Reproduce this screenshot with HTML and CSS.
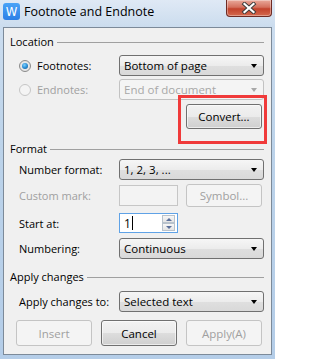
FILE: index.html
```html
<!DOCTYPE html>
<html>
<head>
<meta charset="utf-8">
<link rel="stylesheet" href="styles.css">
</head>
<body>
<div class="window">
  <div class="titlebar">
    <div class="app-icon"><span>W</span></div>
    <div class="title">Footnote and Endnote</div>
    <div class="close">
      <svg width="18" height="12" viewBox="0 0 18 12">
        <path d="M4.5 2 L13.5 10 M13.5 2 L4.5 10" stroke="#3b3b3b" stroke-width="4" stroke-linecap="square" fill="none"/>
        <path d="M4.5 2 L13.5 10 M13.5 2 L4.5 10" stroke="#ffffff" stroke-width="2.2" stroke-linecap="square" fill="none"/>
      </svg>
    </div>
  </div>
  <div class="client">
    <div class="group-head h1">Location</div>

    <div class="row r-foot">
      <div class="label radio-label"><span class="radio checked"></span>Footnotes:</div>
      <div class="combo">Bottom of page<span class="arrow"></span></div>
    </div>
    <div class="row r-end">
      <div class="label radio-label disabled"><span class="radio off"></span>Endnotes:</div>
      <div class="combo disabled">End of document<span class="arrow"></span></div>
    </div>
    <div class="row r-convert">
      <div class="btn-wrap">
        <div class="btn">Convert...</div>
        <div class="highlight"></div>
      </div>
    </div>

    <div class="group-head h2">Format</div>
    <div class="row r-num">
      <div class="label">Number format:</div>
      <div class="combo">1, 2, 3, ...<span class="arrow"></span></div>
    </div>
    <div class="row r-custom">
      <div class="label disabled">Custom mark:</div>
      <div class="field disabled"></div>
      <div class="btn disabled symbol">Symbol...</div>
    </div>
    <div class="row r-start">
      <div class="label">Start at:</div>
      <div class="field active">
        <span class="val">1</span><span class="caret"></span>
        <div class="spin">
          <div class="spin-btn"><span class="up"></span></div>
          <div class="spin-btn"><span class="down"></span></div>
        </div>
      </div>
    </div>
    <div class="row r-numbering">
      <div class="label">Numbering:</div>
      <div class="combo">Continuous<span class="arrow"></span></div>
    </div>

    <div class="group-head h3">Apply changes</div>
    <div class="row r-apply">
      <div class="label">Apply changes to:</div>
      <div class="combo">Selected text<span class="arrow"></span></div>
    </div>
    <div class="row r-buttons">
      <div class="btn disabled">Insert</div>
      <div class="btn">Cancel</div>
      <div class="btn disabled">Apply(A)</div>
    </div>
  </div>
</div>
</body>
</html>
```

FILE: styles.css
```css
html, body {
  margin: 0;
  padding: 0;
}
body {
  width: 275px;
  height: 359px;
  overflow: hidden;
  font-family: "Open Sans", "Noto Sans", sans-serif;
  font-size: 11px;
  color: #000;
}
.window {
  width: 275px;
  height: 359px;
  box-sizing: border-box;
  background: linear-gradient(180deg, #cfdff0 0%, #bcd3ea 40%, #b4cde8 100%);
  display: flex;
  flex-direction: column;
}
.titlebar {
  height: 27px;
  display: flex;
  align-items: flex-start;
  position: relative;
  background: linear-gradient(180deg, #dfe9f5 0%, #cbdcee 100%);
}
.app-icon {
  width: 17px;
  height: 17px;
  margin: 3px 0 0 3px;
  border-radius: 3px;
  background: linear-gradient(180deg, #4aa3f7 0%, #2d7fe6 100%);
  display: flex;
  align-items: center;
  justify-content: center;
}
.app-icon span {
  color: #fff;
  font-family: "DejaVu Sans", sans-serif;
  font-size: 13px;
  line-height: 13px;
  font-weight: normal;
  transform: scaleX(0.9);
}
.title {
  margin: 4px 0 0 4px;
  font-size: 12.5px;
  line-height: 16px;
  color: #000;
}
.close {
  position: absolute;
  top: 0;
  right: 3px;
  width: 46px;
  height: 17px;
  box-sizing: border-box;
  border: 1px solid #6e2b24;
  border-top: none;
  border-radius: 0 0 4px 4px;
  background: linear-gradient(180deg, #e9a99b 0%, #d4705d 45%, #c2422c 55%, #d46a4f 100%);
  box-shadow: inset 0 0 0 1px rgba(255,255,255,0.35);
  display: flex;
  align-items: center;
  justify-content: center;
}
.client {
  margin: 0 3px;
  height: 328px;
  box-sizing: border-box;
  border: 1px solid #7c8a99;
  background: #f0f0f0;
  padding: 0 7px 0 6px;
  display: flex;
  flex-direction: column;
}
.group-head {
  height: 16px;
  display: flex;
  align-items: center;
  line-height: 16px;
  white-space: nowrap;
}
.group-head::after {
  content: "";
  flex: 1;
  height: 0;
  border-top: 1px solid #a0a0a0;
  margin-left: 3px;
  margin-top: 1px;
}
.h1 { margin-top: 6px; }
.h2 { margin-top: 12px; }
.h3 { margin-top: 10px; }

.row {
  display: flex;
  align-items: center;
  padding-left: 9px;
}
.r-foot { margin-top: 5px; height: 21px; }
.r-end { margin-top: 3px; height: 21px; }
.r-convert { margin-top: 4px; height: 25px; justify-content: flex-end; }
.r-num { margin-top: 2px; height: 21px; }
.r-custom { margin-top: 4px; height: 23px; }
.r-start { margin-top: 6px; height: 20px; }
.r-numbering { margin-top: 5px; height: 21px; }
.r-apply { margin-top: 6px; height: 21px; }
.r-buttons { margin-top: 8px; height: 26px; padding-left: 6px; gap: 9px; }

.label {
  width: 100px;
  flex: none;
  display: flex;
  align-items: center;
  white-space: nowrap;
}
.disabled { color: #a0a0a0; }

.radio {
  width: 12px;
  height: 12px;
  box-sizing: border-box;
  border-radius: 50%;
  margin-right: 6px;
  flex: none;
  position: relative;
}
.radio.checked {
  border: 1px solid #8a8a8a;
  background: radial-gradient(circle at 50% 50%, #f4f4f4 0%, #dcdcdc 100%);
}
.radio.checked::after {
  content: "";
  position: absolute;
  left: 2px;
  top: 2px;
  width: 6px;
  height: 6px;
  border-radius: 50%;
  background: radial-gradient(circle at 40% 35%, #7fd0ff 0%, #2a8fd6 50%, #114f86 100%);
}
.radio.off {
  border: 1px solid #c6c6c6;
  background: #f4f4f4;
}

.combo {
  width: 145px;
  height: 21px;
  box-sizing: border-box;
  border: 1px solid #707070;
  border-radius: 3px;
  background: linear-gradient(180deg, #f6f6f6 0%, #ececec 50%, #dfdfdf 51%, #d9d9d9 100%);
  padding-left: 4px;
  display: flex;
  align-items: center;
  position: relative;
  white-space: nowrap;
  font-size: 11.5px;
}
.combo.disabled {
  border-color: #c2c2c2;
  background: #f4f4f4;
  color: #a8a8a8;
}
.arrow {
  position: absolute;
  right: 6px;
  top: 8px;
  width: 0;
  height: 0;
  border-left: 3.5px solid transparent;
  border-right: 3.5px solid transparent;
  border-top: 4px solid #000;
}
.combo.disabled .arrow { border-top-color: #a8a8a8; }

.btn {
  width: 76px;
  height: 25px;
  box-sizing: border-box;
  border: 1px solid #707070;
  border-radius: 3px;
  background: linear-gradient(180deg, #f2f2f2 0%, #ebebeb 50%, #dddddd 51%, #cfcfcf 100%);
  box-shadow: inset 0 0 0 1px rgba(255,255,255,0.6);
  display: flex;
  align-items: center;
  justify-content: center;
  font-size: 11.5px;
  flex: none;
}
.btn.disabled {
  border-color: #c4c4c4;
  background: #f4f4f4;
  box-shadow: none;
  color: #a0a0a0;
}
.r-buttons .btn { height: 26px; }
.btn-wrap {
  position: relative;
  margin-right: 2px;
}
.highlight {
  position: absolute;
  left: -8px;
  top: -9px;
  width: 89px;
  height: 49px;
  box-sizing: border-box;
  border: 3px solid #f03a3a;
}
.symbol {
  margin-left: 8px;
  height: 23px;
}
.field {
  width: 59px;
  height: 21px;
  box-sizing: border-box;
  border: 1px solid #c6c6c6;
  background: #f3f3f3;
  flex: none;
}
.field.active {
  height: 20px;
  border-color: #5fa2e6;
  background: #fff;
  position: relative;
  display: flex;
  align-items: center;
  padding-left: 4px;
  font-size: 12px;
}
.caret {
  width: 1px;
  height: 14px;
  background: #000;
  margin-left: 1px;
}
.spin {
  position: absolute;
  right: 2px;
  top: 1px;
  width: 13px;
  height: 16px;
  display: flex;
  flex-direction: column;
}
.spin-btn {
  flex: 1;
  box-sizing: border-box;
  border: 1px solid #b8c2cc;
  background: linear-gradient(180deg, #f7f7f7, #e4e4e4);
  display: flex;
  align-items: center;
  justify-content: center;
}
.up, .down {
  width: 0;
  height: 0;
  border-left: 3px solid transparent;
  border-right: 3px solid transparent;
}
.up { border-bottom: 3px solid #5a6f9a; }
.down { border-top: 3px solid #5a6f9a; }
```
